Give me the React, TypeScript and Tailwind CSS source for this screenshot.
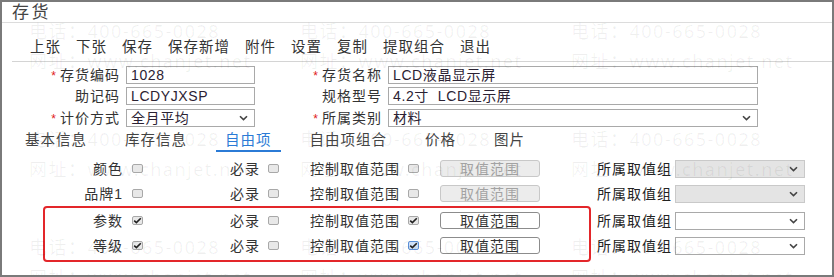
import React from "react";

function Chevron() {
  return (
    <svg width="9" height="6" viewBox="0 0 9 6">
      <path d="M1 1.2 L4.5 4.6 L8 1.2" fill="none" stroke="#444" strokeWidth="1.6" />
    </svg>
  );
}

function Box({ checked, focus }: { checked?: boolean; focus?: boolean }) {
  return (
    <span
      className={`inline-flex h-[9px] w-[11px] items-center justify-center rounded-[2px] border ${
        focus ? "border-[#5b8fd8] bg-[#cfe0f7]" : "border-[#a8a8a8] bg-[#e8e8e8]"
      }`}
    >
      {checked && (
        <svg width="9" height="7" viewBox="0 0 9 7">
          <path d="M1.2 3.6 L3.4 5.6 L7.8 1.2" fill="none" stroke="#222" strokeWidth="1.6" />
        </svg>
      )}
    </span>
  );
}

function Label({ text, star, w }: { text: string; star?: boolean; w: string }) {
  return (
    <div className={`${w} shrink-0 text-right`}>
      {star && <span className="mr-[3px] text-[12px] text-[#e02020]">*</span>}
      {text}
    </div>
  );
}

function Input({ value, w, select }: { value: string; w: string; select?: boolean }) {
  return (
    <div
      className={`${w} ml-[6px] flex h-[18px] shrink-0 items-center justify-between border border-[#a9a9a9] bg-white pl-[4px] pr-[6px] text-[14px] leading-[16px] tracking-[0.6px] text-[#2b2233]`}
    >
      <span className="whitespace-pre">{value}</span>
      {select && <Chevron />}
    </div>
  );
}

const rows = [
  { name: "颜色", checked: false },
  { name: "品牌1", checked: false },
  { name: "参数", checked: true },
  { name: "等级", checked: true, focus: true },
];

function FreeRow({ name, checked, focus }: { name: string; checked: boolean; focus?: boolean }) {
  return (
    <div className="flex h-[25px] items-center">
      <div className="w-[78px] text-right">{name}</div>
      <span className="ml-[9px] flex">
        <Box checked={checked} />
      </span>
      <div className="w-[117px] text-right">必录</div>
      <span className="ml-[8px] flex">
        <Box />
      </span>
      <div className="w-[121px] text-right">控制取值范围</div>
      <span className="ml-[8px] flex">
        <Box checked={checked} focus={focus} />
      </span>
      <div
        className={`ml-[21px] flex h-[17px] w-[100px] items-center justify-center rounded-[3px] border ${
          checked ? "border-[#8c8c8c] bg-white text-[#333]" : "border-[#c8c8c8] bg-[#ececec] text-[#a3a3a3]"
        }`}
      >
        取值范围
      </div>
    </div>
  );
}

function GroupRow({ enabled }: { enabled: boolean }) {
  return (
    <div className="flex h-[25px] items-center">
      <div className="w-[78px]">所属取值组</div>
      <div
        className={`flex h-[18px] w-[130px] items-center justify-end border pr-[6px] ${
          enabled ? "border-[#a9a9a9] bg-white" : "border-[#c9c9c9] bg-[#e4e4e4]"
        }`}
      >
        <Chevron />
      </div>
    </div>
  );
}

export default function App() {
  const marks = [0, 1, 2];
  return (
    <div className="relative h-[277px] w-[834px] overflow-hidden border-2 border-[#7a7a7a] bg-white font-['Liberation_Sans','Noto_Sans_CJK_SC',sans-serif] text-[14px] leading-[18px] tracking-[1px] text-[#333]">
      {/* title */}
      <div className="h-[21px] border-b border-[#dcdcdc] pl-[10px] text-[17px] leading-[21px] tracking-[2.5px] text-[#444]">
        存货
      </div>

      {/* toolbar */}
      <div className="ml-[10px] flex h-[39px] items-end gap-[15px] border-b border-[#d4d4d4] pb-[5px] pl-[18px] text-[14.5px] leading-[18px] text-[#333]">
        {["上张", "下张", "保存", "保存新增", "附件", "设置", "复制", "提取组合", "退出"].map((t) => (
          <span key={t}>{t}</span>
        ))}
      </div>

      {/* form */}
      <div className="mt-[4px] flex flex-col gap-[3px]">
        <div className="flex h-[18px] items-center">
          <Label w="w-[118px]" star text="存货编码" />
          <Input w="w-[129px]" value="1028" />
          <Label w="w-[127px]" star text="存货名称" />
          <Input w="w-[370px]" value="LCD液晶显示屏" />
        </div>
        <div className="flex h-[18px] items-center">
          <Label w="w-[118px]" text="助记码" />
          <Input w="w-[129px]" value="LCDYJXSP" />
          <Label w="w-[127px]" text="规格型号" />
          <Input w="w-[370px]" value="4.2寸  LCD显示屏" />
        </div>
        <div className="mt-[1px] flex h-[18px] items-center">
          <Label w="w-[118px]" star text="计价方式" />
          <Input w="w-[129px]" value="全月平均" select />
          <Label w="w-[127px]" star text="所属类别" />
          <Input w="w-[370px]" value="材料" select />
        </div>
      </div>

      {/* tabs */}
      <div className="flex gap-[20px] pl-[14px] text-[14.5px]">
        {["基本信息", "库存信息", "自由项", "自由项组合", "价格", "图片"].map((t) => (
          <div
            key={t}
            className={`border-b-2 px-[9px] pb-[1px] pt-[4px] leading-[18px] ${
              t === "自由项" ? "border-[#2b7bd6] text-[#2b7bd6]" : "border-transparent text-[#444]"
            }`}
          >
            {t}
          </div>
        ))}
      </div>

      {/* free items */}
      <div className="mt-[4px] flex">
        <div className="ml-[41px] w-[548px]">
          <div className="border-x-2 border-transparent">
            <FreeRow {...rows[0]} />
            <FreeRow {...rows[1]} />
          </div>
          <div className="rounded-[4px] border-2 border-[#e3262a] pb-[2px]">
            <FreeRow {...rows[2]} />
            <FreeRow {...rows[3]} />
          </div>
        </div>
        <div className="pl-[6px] text-[#222]">
          <GroupRow enabled={false} />
          <GroupRow enabled={false} />
          <div className="h-[2px]" />
          <GroupRow enabled />
          <GroupRow enabled />
        </div>
      </div>

      {/* watermark */}
      <div className="pointer-events-none absolute inset-0 flex flex-col gap-[48px] pt-[14px] font-['Noto_Sans','Noto_Sans_CJK_SC',sans-serif] text-[18px] leading-[30px] tracking-[1.5px] text-black/[0.06]">
        {marks.map((r) => (
          <div key={r} className="flex pl-[27px]">
            {marks.map((c) => (
              <div key={c} className="w-[271px] shrink-0 whitespace-nowrap">
                <div>电话：400-665-0028</div>
                <div>网址：www.chanjet.net</div>
              </div>
            ))}
          </div>
        ))}
      </div>
    </div>
  );
}
